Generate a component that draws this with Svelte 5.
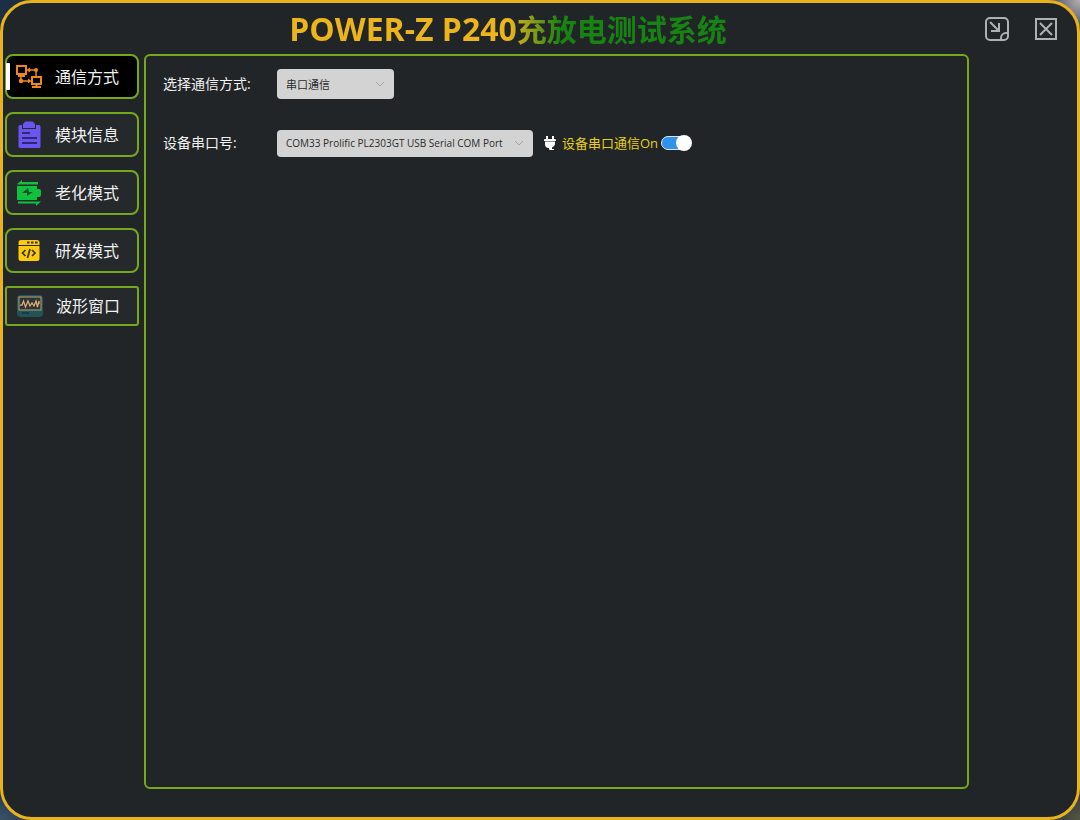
<script lang="ts">
  type Page = 'comm' | 'module' | 'aging' | 'dev' | 'wave';

  const pages: { id: Page; label: string }[] = [
    { id: 'comm', label: '通信方式' },
    { id: 'module', label: '模块信息' },
    { id: 'aging', label: '老化模式' },
    { id: 'dev', label: '研发模式' },
    { id: 'wave', label: '波形窗口' }
  ];

  let current = $state<Page>('comm');
  let connected = $state(true);
</script>

<div class="desktop">
  <div class="window">
    <header>
      <h1><span>POWER-Z P240</span>充放电测试系统</h1>
      <div class="actions">
        <button type="button" aria-label="最小化">
          <svg width="24" height="24" viewBox="0 0 24 24" fill="none" stroke="currentColor" stroke-width="2">
            <path d="M15 23H5a4 4 0 0 1-4-4V5a4 4 0 0 1 4-4h14a4 4 0 0 1 4 4v10" />
            <path d="M5 5l8.500 8.500M14 6v8H6" />
            <path d="M16 23v-2a5 5 0 0 1 5-5h2v3a4 4 0 0 1-4 4z" />
          </svg>
        </button>
        <button type="button" aria-label="关闭">
          <svg width="22" height="22" viewBox="0 0 22 22" fill="none" stroke="currentColor" stroke-width="2">
            <path d="M1 1h20v20H1zM5 5l12 12M17 5L5 17" />
          </svg>
        </button>
      </div>
    </header>

    <div class="body">
      <nav>
        {#each pages as page (page.id)}
          <button
            type="button"
            class={['item', page.id]}
            class:active={current === page.id}
            aria-current={current === page.id ? 'page' : undefined}
            onclick={() => (current = page.id)}
          >
            {#if page.id === 'comm'}
              <svg width="26" height="26" viewBox="0 0 26 26" fill="none" stroke="#f0861f" stroke-width="2">
                <path d="M1 2h9v8H1zM5.500 10v3M2 12h7M16 13h9v7h-9zM20.500 20v3M16 23h9" />
                <path d="M12 6h8v7M14 17H5v-4" stroke-width="1.500" />
                <g fill="#f0861f" stroke="none">
                  <circle cx="20" cy="6" r="2" />
                  <circle cx="5" cy="17" r="2.250" />
                  <path d="M10.500 6l3.500-2.500v5zM15.500 17l-3.500-2.500v5z" />
                </g>
              </svg>
            {:else if page.id === 'module'}
              <svg width="26" height="28" viewBox="0 0 26 28" fill="#6a55ef">
                <path d="M3 4h3v4h14V4h3a1.500 1.500 0 0 1 1.500 1.500v20A1.500 1.500 0 0 1 23 27H4a1.500 1.500 0 0 1-1.500-1.500v-20A1.500 1.500 0 0 1 4 4z" />
                <path d="M8 2.500A2 2 0 0 1 10 .5h6a2 2 0 0 1 2 2h1V7H7V2.500z" />
                <path d="M6 12h8M6 17h15M6 22h15" stroke="#2c2872" stroke-width="2" />
              </svg>
            {:else if page.id === 'aging'}
              <svg width="26" height="26" viewBox="0 0 26 26" fill="#0fc13c">
                <path d="M1 4L6 0v2h16v2.500H1zM25 21.500l-5 4.500v-2.500H2v-2z" />
                <path d="M1 6h20v3h2a2 2 0 0 1 2 2v4a2 2 0 0 1-2 2h-2v3H1z" />
                <path d="M12 8l-6 5h5v3l6-4h-4z" fill="#14532b" />
              </svg>
            {:else if page.id === 'dev'}
              <svg width="26" height="26" viewBox="0 0 26 26" fill="#fbcb0c">
                <path d="M5 2h16a2.500 2.500 0 0 1 2.500 2.500V7h-21V4.500A2.500 2.500 0 0 1 5 2z" />
                <path d="M2.500 8h21v12.500A2.500 2.500 0 0 1 21 23H5a2.500 2.500 0 0 1-2.500-2.500z" />
                <path d="M11 4.500h2.500M15 4.500h2.500M19 4.500h2.500" stroke="#3a3311" stroke-width="2" />
                <path d="M9.500 12L6.500 15l3 3M16 12l3 3-3 3M14 11l-2.500 9" fill="none" stroke="#3a3311" stroke-width="1.750" />
              </svg>
            {:else}
              <svg width="26" height="22" viewBox="0 0 26 22">
                <rect width="26" height="22" rx="4" fill="#1f5459" />
                <rect x="2" y="2" width="22" height="13" fill="#26383d" stroke="#c99a63" />
                <path d="M3 10h2l1.500-4 2 6L11 6l2 5 2-3 2 3 2-5 1.500 6L22 6v3" fill="none" stroke="#e9aa6c" stroke-width="1.250" />
                <path d="M5 18h7" stroke="#123f47" stroke-width="2" />
              </svg>
            {/if}
            <span>{page.label}</span>
          </button>
        {/each}
      </nav>

      <main>
        <div class="row">
          <label class="name" for="mode">选择通信方式:</label>
          <div class="select short">
            <select id="mode">
              <option>串口通信</option>
            </select>
            <svg width="8" height="6" viewBox="0 0 8 6"><path d="M0 1l4 4 4-4" /></svg>
          </div>
        </div>

        <div class="row">
          <label class="name" for="port">设备串口号:</label>
          <div class="select long">
            <select id="port">
              <option>COM33 Prolific PL2303GT USB Serial COM Port</option>
            </select>
            <svg width="8" height="6" viewBox="0 0 8 6"><path d="M0 1l4 4 4-4" /></svg>
          </div>
          <svg class="plug" width="12" height="14" viewBox="0 0 12 14">
            <path d="M2 0h2v3h4V0h2v3h1a1 1 0 0 1 1 1v1H0V4a1 1 0 0 1 1-1h1zM1 5.500h10V8a4 4 0 0 1-3 3.500V13h2v1H6a1 1 0 0 1-1-1v-1H4a4 4 0 0 1-3-4z" />
          </svg>
          <label class="status" for="link">设备串口通信{connected ? 'On' : 'Off'}</label>
          <input id="link" class="switch" type="checkbox" role="switch" bind:checked={connected} />
        </div>
      </main>
    </div>
  </div>
</div>

<style>
  :global(body) {
    margin: 0;
  }

  .desktop {
    min-height: 100vh;
    display: flex;
    background:
      radial-gradient(circle at 0 100%, #3b5268, transparent 40px),
      radial-gradient(circle at 100% 0, #b9adb2, transparent 40px),
      radial-gradient(circle at 100% 100%, #55563f, transparent 40px),
      #1d2f45;
    font-family: 'Open Sans', 'Noto Sans CJK SC', sans-serif;
    color: #f0f0f0;
  }

  .window {
    flex: 1;
    display: flex;
    flex-direction: column;
    box-sizing: border-box;
    border: 3px solid #e9b41b;
    border-radius: 32px;
    background: #222527;
  }

  header {
    display: flex;
    align-items: center;
    height: 51px;
    padding: 0 20px 0 28px;
  }

  h1 {
    margin: 0 auto;
    padding-top: 2px;
    font-size: 30px;
    line-height: 44px;
    font-weight: 700;
    white-space: nowrap;
    color: transparent;
    background: linear-gradient(90deg, #edb51c 50%, #178312 62%);
    background-clip: text;
  }

  h1 span {
    font-size: 32px;
  }

  .actions {
    display: flex;
    align-items: center;
    gap: 26px;
  }

  button {
    font: inherit;
    color: inherit;
    cursor: pointer;
  }

  .actions button {
    display: flex;
    padding: 0;
    border: 0;
    background: none;
    color: #adb1b3;
  }

  .body {
    flex: 1;
    display: flex;
    gap: 5px;
    padding: 0 108px 28px 2px;
  }

  nav {
    display: flex;
    flex-direction: column;
    gap: 13px;
    width: 134px;
  }

  .item {
    position: relative;
    display: flex;
    align-items: center;
    gap: 13px;
    box-sizing: border-box;
    height: 45px;
    padding: 0 0 0 9px;
    border: 2px solid #76a81d;
    border-radius: 8px;
    background: #25292c;
    font-size: 16px;
    line-height: 24px;
  }

  .item.active {
    background: #000;
  }

  .item.active::before {
    content: '';
    position: absolute;
    top: 7px;
    bottom: 7px;
    left: -1px;
    width: 4px;
    border-radius: 1px;
    background: #fff;
  }

  .item.wave {
    height: 40px;
    padding-left: 10px;
    border-radius: 3px;
  }

  main {
    flex: 1;
    box-sizing: border-box;
    padding: 13px 17px;
    border: 2px solid #76a81d;
    border-radius: 6px;
  }

  .row {
    display: flex;
    align-items: center;
    height: 30px;
    margin-bottom: 29px;
  }

  .name {
    width: 114px;
    font-size: 14px;
    line-height: 20px;
  }

  .select {
    display: grid;
    align-items: center;
  }

  .select > * {
    grid-area: 1 / 1;
  }

  .select svg {
    justify-self: end;
    margin-right: 10px;
    fill: none;
    stroke: #a5a5a5;
    pointer-events: none;
  }

  .short {
    width: 117px;
  }

  .long {
    width: 256px;
  }

  select {
    appearance: none;
    width: 100%;
    height: 30px;
    padding: 0 9px;
    border: 0;
    border-radius: 4px;
    background: #d3d3d3;
    color: #2c2c2c;
    font-family: inherit;
    font-size: 11px;
  }

  .long select {
    height: 27px;
    font-size: 10px;
  }

  .plug {
    margin: 0 6px 0 11px;
    fill: #fff;
  }

  .status {
    font-size: 13px;
    line-height: 20px;
    color: #e6cf12;
  }

  .switch {
    appearance: none;
    display: flex;
    align-items: center;
    box-sizing: border-box;
    width: 30px;
    height: 14px;
    margin: 0 0 0 3px;
    border: 1px solid #d8e6f2;
    border-radius: 7px;
    background: #777;
    cursor: pointer;
  }

  .switch:checked {
    justify-content: flex-end;
    background: #2f93ea;
  }

  .switch::before {
    content: '';
    flex: none;
    width: 16px;
    height: 16px;
    margin: 0 -2px;
    border-radius: 50%;
    background: #fff;
  }
</style>
